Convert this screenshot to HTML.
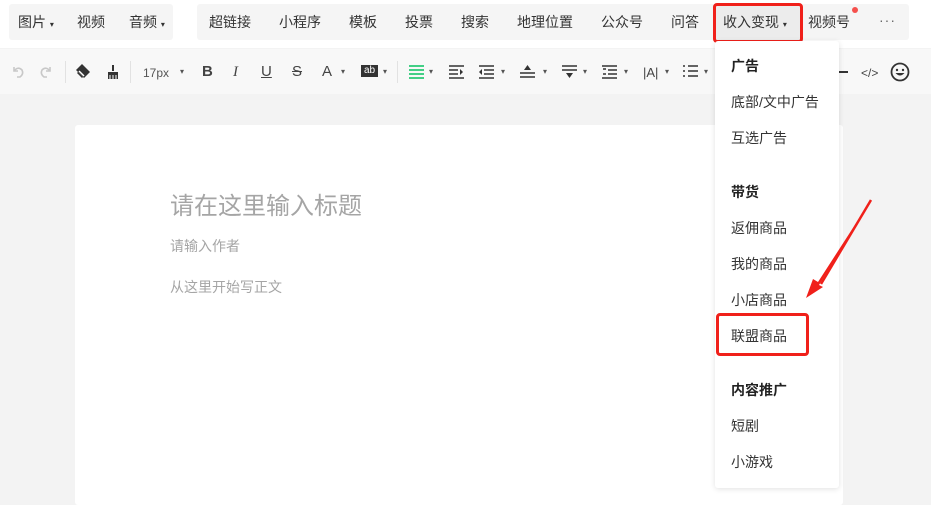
<!DOCTYPE html>
<html><head><meta charset="utf-8"><style>
*{margin:0;padding:0;box-sizing:border-box}
body{width:931px;height:499px;overflow:hidden;background:#f3f3f3;font-family:"Liberation Sans","Noto Sans CJK SC",sans-serif;position:relative;color:#333}
.a{position:absolute;white-space:nowrap}
.top{position:absolute;left:0;top:0;width:931px;height:48px;background:#fff}
.g{position:absolute;top:4px;height:36px;background:#f5f5f5;border-radius:3px}
.m{position:absolute;top:12px;font-size:14px;color:#333;line-height:20px}
.tb{position:absolute;left:0;top:49px;width:931px;height:45px;background:#f8f8f8}
.i{position:absolute;top:62px;font-size:15px;color:#444;line-height:20px}
.c{position:absolute;font-size:8px;color:#555;top:67px}
.dv{position:absolute;top:61px;width:1px;height:22px;background:#e2e2e2}
.s{position:absolute;top:64px}
.paper{position:absolute;left:75px;top:125px;width:768px;height:380px;background:#fff;border-radius:3px}
.dd{position:absolute;left:715px;top:41px;width:124px;height:447px;background:#fff;box-shadow:0 1px 6px rgba(0,0,0,.12);border-radius:3px}
.d{position:absolute;left:731px;font-size:14px;color:#333;line-height:20px}
.b{font-weight:bold;color:#222}
</style></head><body>
<div class="top"></div>
<div class="g" style="left:9px;width:164px"></div>
<div class="g" style="left:197px;width:712px"></div>
<div class="m" style="left:18px">图片 <span style="font-size:8px">▾</span></div>
<div class="m" style="left:77px">视频</div>
<div class="m" style="left:129px">音频 <span style="font-size:8px">▾</span></div>
<div class="m" style="left:209px">超链接</div>
<div class="m" style="left:279px">小程序</div>
<div class="m" style="left:349px">模板</div>
<div class="m" style="left:405px">投票</div>
<div class="m" style="left:461px">搜索</div>
<div class="m" style="left:517px">地理位置</div>
<div class="m" style="left:601px">公众号</div>
<div class="m" style="left:671px">问答</div>
<div class="a" style="left:715px;top:5px;width:86px;height:35px;background:#ececec"></div>
<div class="m" style="left:723px">收入变现 <span style="font-size:8px">▾</span></div>
<div class="a" style="left:713px;top:3px;width:90px;height:40px;border:3px solid #f0201a;border-radius:4px"></div>
<div class="m" style="left:808px">视频号</div>
<div class="a" style="left:852px;top:7px;width:6px;height:6px;border-radius:50%;background:#f5504c"></div>
<div class="m" style="left:879px;top:10px;letter-spacing:1px;color:#666">···</div>

<div class="tb"></div>
<svg class="s" style="left:10px" width="16" height="16" viewBox="0 0 16 16" fill="none" stroke="#c8c8c8" stroke-width="1.6"><path d="M4 3 V7 H8"/><path d="M4 7 Q8 2 12 6 Q14 10 10 13 H7"/></svg>
<svg class="s" style="left:38px" width="16" height="16" viewBox="0 0 16 16" fill="none" stroke="#c8c8c8" stroke-width="1.6"><path d="M12 3 V7 H8"/><path d="M12 7 Q8 2 4 6 Q2 10 6 13 H9"/></svg>
<div class="dv" style="left:65px"></div>
<svg class="s" style="left:74px;top:63px" width="18" height="18" viewBox="0 0 18 18"><path d="M8 1 L16 9 L10 15 L2 7Z" fill="#333"/><path d="M4 9 L9 14 L8 15 L3 10Z" fill="#333"/><path d="M5 8 L10 13" stroke="#fff" stroke-width="1.5"/></svg>
<svg class="s" style="left:106px" width="14" height="16" viewBox="0 0 14 16"><rect x="6" y="1" width="2" height="6" fill="#333"/><path d="M2 8 H12 V15 H2Z" fill="#333"/><path d="M4 15 V11 M7 15 V11 M10 15 V11" stroke="#fff" stroke-width="1"/></svg>
<div class="dv" style="left:130px"></div>
<div class="i" style="left:143px;font-size:12px;top:63px;color:#555">17px</div><div class="c" style="left:180px">▾</div>
<div class="i" style="left:202px;font-weight:bold">B</div>
<div class="i" style="left:233px;font-style:italic;font-family:'Liberation Serif',serif">I</div>
<div class="i" style="left:261px;text-decoration:underline">U</div>
<div class="i" style="left:292px;text-decoration:line-through">S</div>
<div class="i" style="left:322px">A</div><div class="c" style="left:341px">▾</div>
<div class="a" style="left:361px;top:65px;width:17px;height:12px;background:#333;color:#fff;font-size:10px;line-height:12px;text-align:center">ab</div><div class="c" style="left:383px">▾</div>
<div class="dv" style="left:397px"></div>
<svg class="s" style="left:409px" width="15" height="15" viewBox="0 0 15 15" stroke="#07c160" stroke-width="1.6"><path d="M0 2H15M0 6H15M0 10H15M0 14H15"/></svg><div class="c" style="left:429px">▾</div>
<svg class="s" style="left:449px" width="15" height="15" viewBox="0 0 15 15" stroke="#333" stroke-width="1.4" fill="#333"><path d="M0 2H15M0 6H9M0 10H9M0 14H15"/><path d="M11 5 L14 8 L11 11Z" stroke="none"/></svg>
<svg class="s" style="left:479px" width="15" height="15" viewBox="0 0 15 15" stroke="#333" stroke-width="1.4" fill="#333"><path d="M0 2H15M5 6H15M5 10H15M0 14H15"/><path d="M3 5 L0 8 L3 11Z" stroke="none"/></svg><div class="c" style="left:501px">▾</div>
<svg class="s" style="left:520px" width="15" height="15" viewBox="0 0 15 15" stroke="#333" stroke-width="1.4" fill="#333"><path d="M0 9H15M0 13H15"/><path d="M7.5 1 L4 6 H11Z" stroke="none"/></svg><div class="c" style="left:543px">▾</div>
<svg class="s" style="left:562px" width="15" height="15" viewBox="0 0 15 15" stroke="#333" stroke-width="1.4" fill="#333"><path d="M0 2H15M0 6H15"/><path d="M7.5 14 L4 9 H11Z" stroke="none"/></svg><div class="c" style="left:583px">▾</div>
<svg class="s" style="left:602px" width="15" height="15" viewBox="0 0 15 15" stroke="#333" stroke-width="1.4" fill="#333"><path d="M0 2H15M6 6H15M6 10H15M0 14H15"/><path d="M1 5H4M1 10H4" /></svg><div class="c" style="left:624px">▾</div>
<div class="i" style="left:643px;font-size:13px;top:63px">|A|</div><div class="c" style="left:665px">▾</div>
<svg class="s" style="left:683px" width="15" height="15" viewBox="0 0 15 15" stroke="#333" stroke-width="1.4"><path d="M0 2H2M0 7H2M0 12H2M5 2H15M5 7H15M5 12H15"/></svg><div class="c" style="left:704px">▾</div>
<div class="a" style="left:838px;top:71px;width:10px;height:2px;background:#333"></div>
<div class="i" style="left:861px;font-size:12px;top:63px">&lt;/&gt;</div>
<svg class="a" style="left:890px;top:62px" width="20" height="20" viewBox="0 0 20 20"><circle cx="10" cy="10" r="8.5" fill="none" stroke="#333" stroke-width="1.8"/><circle cx="7" cy="8" r="1.2" fill="#333"/><circle cx="13" cy="8" r="1.2" fill="#333"/><path d="M5.5 11 Q10 16 14.5 11Z" fill="#333"/></svg>

<div class="paper"></div>
<div class="a" style="left:170px;top:186px;font-size:24px;color:#a5a5a5">请在这里输入标题</div>
<div class="a" style="left:170px;top:236px;font-size:14px;color:#a5a5a5">请输入作者</div>
<div class="a" style="left:170px;top:277px;font-size:14px;color:#a5a5a5">从这里开始写正文</div>

<div class="dd"></div>
<div class="d b" style="top:56px">广告</div>
<div class="d" style="top:92px">底部/文中广告</div>
<div class="d" style="top:128px">互选广告</div>
<div class="d b" style="top:182px">带货</div>
<div class="d" style="top:218px">返佣商品</div>
<div class="d" style="top:254px">我的商品</div>
<div class="d" style="top:290px">小店商品</div>
<div class="d" style="top:326px">联盟商品</div>
<div class="a" style="left:716px;top:313px;width:93px;height:43px;border:3px solid #f0201a;border-radius:4px"></div>
<div class="d b" style="top:380px">内容推广</div>
<div class="d" style="top:416px">短剧</div>
<div class="d" style="top:452px">小游戏</div>

<svg class="a" style="left:0;top:0" width="931" height="499"><path d="M871 200 L818 282 L813 279 L806 298 L823 287 L819 285 Z" fill="#f0201a"/><path d="M871 200 L821 284" stroke="#f0201a" stroke-width="2.5"/></svg>
</body></html>
